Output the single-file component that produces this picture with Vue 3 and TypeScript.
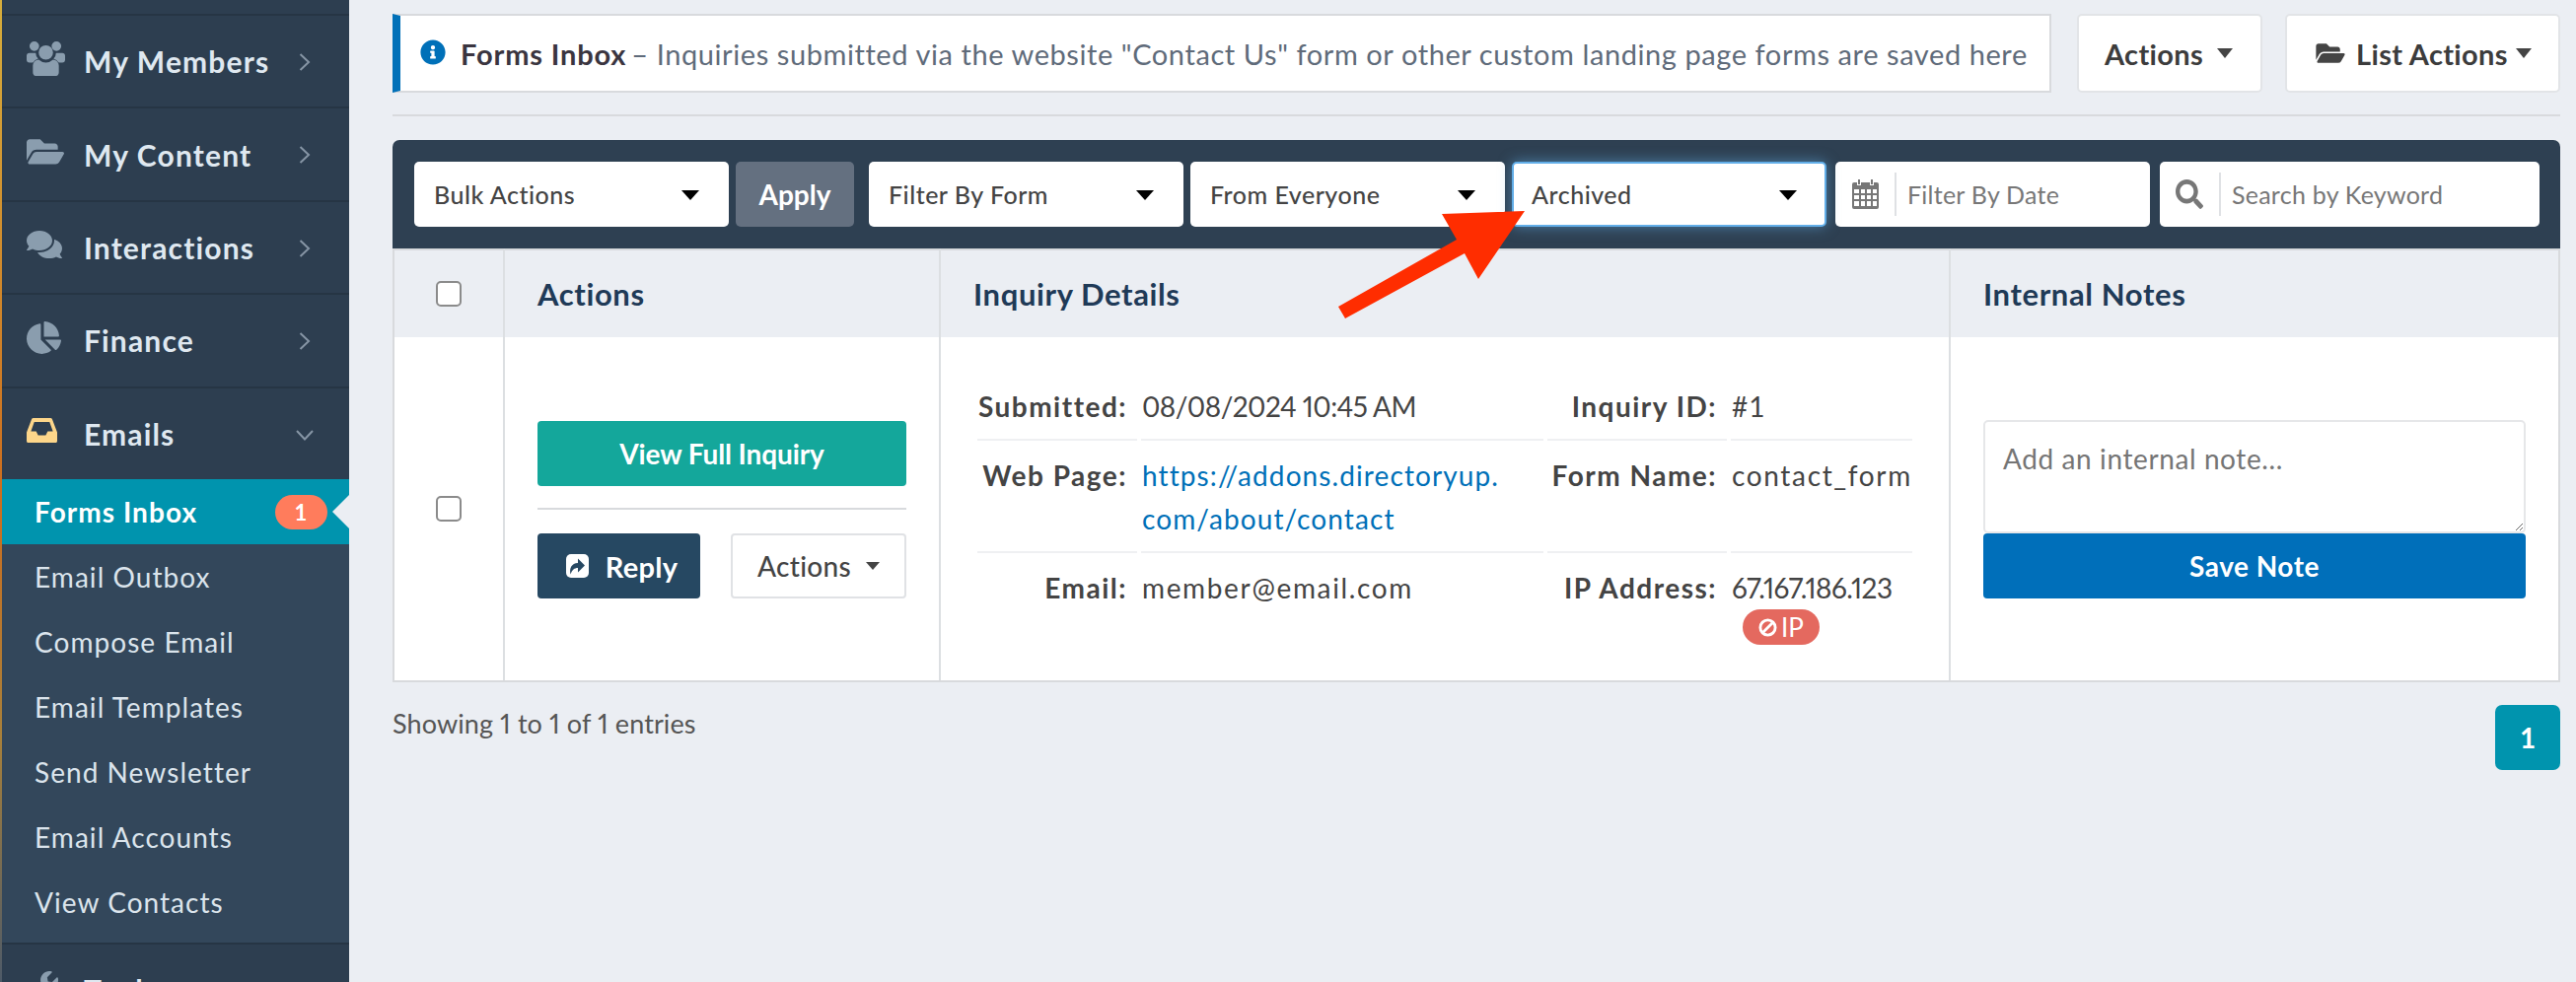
<script setup lang="ts">
interface NavIcon { box: string; d: string }
const icons: Record<string, NavIcon> = {
  folder: { box: '0 0 576 512', d: 'M572.694 292.093L500.27 416.248A63.997 63.997 0 0 1 444.989 448H45.025c-18.523 0-30.064-20.093-20.731-36.093l72.424-124.155A64 64 0 0 1 152 256h399.964c18.523 0 30.064 20.093 20.73 36.093zM152 224h328v-48c0-26.51-21.49-48-48-48H272l-64-64H48C21.49 64 0 85.49 0 112v278.046l69.077-118.418C86.214 242.25 117.989 224 152 224z' },
  comments: { box: '0 0 576 512', d: 'M416 192c0-88.4-93.1-160-208-160S0 103.6 0 192c0 34.3 14.1 65.9 38 92-13.4 30.2-35.5 54.2-35.8 54.5-2.2 2.3-2.8 5.7-1.5 8.7S4.8 352 8 352c36.6 0 66.9-12.3 88.7-25 32.2 15.7 70.3 25 111.3 25 114.9 0 208-71.6 208-160zm122 220c23.9-26 38-57.7 38-92 0-66.9-53.5-124.2-129.3-148.1.9 6.6 1.3 13.3 1.3 20.1 0 105.9-107.7 192-240 192-10.8 0-21.3-.8-31.7-1.9C207.8 439.6 281.8 480 368 480c41 0 79.1-9.2 111.3-25 21.8 12.7 52.1 25 88.7 25 3.2 0 6.1-1.9 7.3-4.8 1.3-2.9.7-6.3-1.5-8.7-.3-.3-22.4-24.2-35.8-54.5z' },
  pie: { box: '0 0 544 512', d: 'M527.79 288H290.5l158.03 158.03c6.04 6.04 15.98 6.53 22.19.68 38.7-36.46 65.32-85.61 73.13-140.86 1.34-9.46-6.51-17.85-16.06-17.85zm-15.83-64.8C503.72 103.74 408.26 8.28 288.8.04 279.68-.59 272 7.1 272 16.24V240h223.77c9.14 0 16.82-7.68 16.19-16.8zM224 288V50.71c0-9.55-8.39-17.4-17.84-16.06C86.99 51.49-4.1 155.6.14 280.37 4.5 408.51 114.83 513.59 243.03 511.98c50.4-.63 96.97-16.87 135.26-44.03 7.9-5.6 8.42-17.23 1.57-24.08L224 288z' },
  users: { box: '0 0 40 36', d: 'M8 0a5 5 0 1 1 0 10a5 5 0 1 1 0-10zM31 0a5 5 0 1 1 0 10a5 5 0 1 1 0-10zM3 12h6.5a8 8 0 0 0 2.5 6a11 11 0 0 0-5.5 4H3a3 3 0 0 1-3-3v-4a3 3 0 0 1 3-3zM30.500 12H37a3 3 0 0 1 3 3v4a3 3 0 0 1-3 3h-3.500a11 11 0 0 0-5.500-4a8 8 0 0 0 2.500-6zM20 4a7.500 7.500 0 1 1 0 15a7.500 7.500 0 1 1 0-15zM12.500 19a11 11 0 0 0 15 0a6 6 0 0 1 6 6v7a4 4 0 0 1-4 4h-19a4 4 0 0 1-4-4v-7a6 6 0 0 1 6-6z' },
  inbox: { box: '0 0 32 26', d: 'M7 0h18a2 2 0 0 1 1.800 1.200L32 15v9a2 2 0 0 1-2 2H2a2 2 0 0 1-2-2v-9L5.200 1.200A2 2 0 0 1 7 0zM8 4L4.500 14H10l2 4h8l2-4h5.500L24 4z' },
  wrench: { box: '0 0 512 512', d: 'M507.73 109.1c-2.24-9.03-13.54-12.09-20.12-5.51l-74.36 74.36-67.88-11.31-11.31-67.88 74.36-74.36c6.62-6.62 3.43-17.9-5.66-20.16-47.38-11.74-99.55.91-136.58 37.93-39.64 39.64-50.55 97.1-34.05 147.2L18.74 402.76c-24.99 24.99-24.99 65.51 0 90.5 24.99 24.99 65.51 24.99 90.5 0l213.21-213.21c50.12 16.71 107.47 5.68 147.37-34.22 37.07-37.07 49.7-89.32 37.91-136.73z' }
}
const topNav = [
  { label: 'My Members', icon: 'users', w: 39 },
  { label: 'My Content', icon: 'folder', w: 38 },
  { label: 'Interactions', icon: 'comments', w: 36 },
  { label: 'Finance', icon: 'pie', w: 35 }
]
const subNav = ['Email Outbox', 'Compose Email', 'Email Templates', 'Send Newsletter', 'Email Accounts', 'View Contacts']
const selects = ['Filter By Form', 'From Everyone']
</script>

<template>
  <div class="page">
    <aside class="sidebar">
      <div class="nav-item" v-for="n in topNav" :key="n.label">
        <span class="nav-ico"><svg :width="n.w" :viewBox="icons[n.icon].box" fill="#8a9dae"><path :d="icons[n.icon].d" /></svg></span>
        <span class="nav-label">{{ n.label }}</span>
        <svg class="chev" width="12" height="20" viewBox="0 0 12 20" fill="none" stroke="#8695a5" stroke-width="2"><path d="M1.500 2l8.500 8-8.500 8" /></svg>
      </div>
      <div class="nav-item">
        <span class="nav-ico"><svg width="31" :viewBox="icons.inbox.box" fill="#fdd68a"><path :d="icons.inbox.d" /></svg></span>
        <span class="nav-label">Emails</span>
        <svg class="chev down" width="20" height="12" viewBox="0 0 20 12" fill="none" stroke="#8695a5" stroke-width="2"><path d="M2 2l8 8.500 8-8.500" /></svg>
      </div>
      <div class="sub-active">
        <span>Forms Inbox</span>
        <span class="count">1</span>
        <span class="notch"></span>
      </div>
      <div class="sub-list">
        <div class="sub-item" v-for="s in subNav" :key="s">{{ s }}</div>
      </div>
      <div class="nav-item">
        <span class="nav-ico"><svg width="32" :viewBox="icons.wrench.box" fill="#8a9dae"><path :d="icons.wrench.d" /></svg></span>
        <span class="nav-label">Tools</span>
      </div>
    </aside>

    <main class="main">
      <div class="top-row">
        <div class="alert">
          <svg class="info" width="26" height="26" viewBox="0 0 512 512" fill="#0070b8"><path d="M256 8C119.043 8 8 119.083 8 256c0 136.997 111.043 248 248 248s248-111.003 248-248C504 119.083 392.957 8 256 8zm0 110c23.196 0 42 18.804 42 42s-18.804 42-42 42-42-18.804-42-42 18.804-42 42-42zm56 254c0 6.627-5.373 12-12 12h-88c-6.627 0-12-5.373-12-12v-24c0-6.627 5.373-12 12-12h12v-64h-12c-6.627 0-12-5.373-12-12v-24c0-6.627 5.373-12 12-12h64c6.627 0 12 5.373 12 12v100h12c6.627 0 12 5.373 12 12v24z" /></svg>
          <strong>Forms Inbox</strong>
          <span class="alert-text">– Inquiries submitted via the website "Contact Us" form or other custom landing page forms are saved here</span>
        </div>
        <div class="top-btn actions-btn">Actions <i class="caret"></i></div>
        <div class="top-btn list-btn">
          <svg width="30" height="26" viewBox="0 0 576 512" fill="#444"><path :d="icons.folder.d" /></svg>
          List Actions <i class="caret tight"></i>
        </div>
      </div>
      <hr class="rule" />

      <div class="toolbar">
        <div class="sel">Bulk Actions<i class="tri"></i></div>
        <div class="apply">Apply</div>
        <div class="sel" v-for="s in selects" :key="s">{{ s }}<i class="tri"></i></div>
        <div class="sel focused">Archived<i class="tri"></i></div>
        <div class="field date">
          <span class="field-ico">
            <svg width="27" height="30" viewBox="0 0 27 30" fill="#777"><path d="M6 0h2v5H6zM19 0h2v5h-2zM2 3h3v3h4V3h9v3h4V3h3a2 2 0 0 1 2 2v23a2 2 0 0 1-2 2H2a2 2 0 0 1-2-2V5a2 2 0 0 1 2-2zM2 10v4h5v-4zm7 0v4h4v-4zm6 0v4h4v-4zm6 0v4h4v-4zM2 16v4h5v-4zm7 0v4h4v-4zm6 0v4h4v-4zm6 0v4h4v-4zM2 22v5h5v-5zm7 0v5h4v-5zm6 0v5h4v-5zm6 0v5h4v-5z" /></svg>
          </span>
          <span>Filter By Date</span>
        </div>
        <div class="field search">
          <span class="field-ico">
            <svg width="28" height="30" viewBox="0 0 512 512" preserveAspectRatio="none" fill="#777"><path d="M505 442.700L405.300 343c-4.500-4.500-10.600-7-17-7H372c27.600-35.300 44-79.700 44-128C416 93.100 322.900 0 208 0S0 93.100 0 208s93.100 208 208 208c48.300 0 92.700-16.400 128-44v16.300c0 6.400 2.500 12.500 7 17l99.700 99.700c9.400 9.400 24.600 9.400 33.900 0l28.300-28.300c9.400-9.400 9.400-24.600.1-34zM208 336c-70.700 0-128-57.200-128-128 0-70.700 57.200-128 128-128 70.700 0 128 57.200 128 128 0 70.700-57.200 128-128 128z" /></svg>
          </span>
          <span>Search by Keyword</span>
        </div>
      </div>

      <div class="table">
        <div class="th cell-check"><input class="check" type="checkbox" /></div>
        <div class="th">Actions</div>
        <div class="th">Inquiry Details</div>
        <div class="th last">Internal Notes</div>

        <div class="td cell-check"><input class="check" type="checkbox" /></div>
        <div class="td act-cell">
          <div class="btn-view">View Full Inquiry</div>
          <div class="act-rule"></div>
          <div class="act-row">
            <div class="btn-reply">
              <svg width="23" height="24" viewBox="0 0 23 24"><rect width="23" height="24" rx="5" fill="#fff" /><path d="M4.500 20.500c-1.500-6.500 1-11 7.500-11.500V4.500l7 7-7 7V14c-3.500 0-6 2-7.500 6.500z" fill="#264862" /></svg>
              Reply
            </div>
            <div class="btn-act">Actions <i class="caret small"></i></div>
          </div>
        </div>
        <div class="td details">
          <div class="dl">
            <div class="k">Submitted:</div><div class="v num">08/08/2024 10:45 AM</div>
            <div class="k">Inquiry ID:</div><div class="v">#1</div>
            <div class="k">Web Page:</div><div class="v"><a class="link">https://addons.directoryup.<br />com/about/contact</a></div>
            <div class="k">Form Name:</div><div class="v wide">contact_form</div>
            <div class="k end">Email:</div><div class="v wide end">member@email.com</div>
            <div class="k end">IP Address:</div>
            <div class="v num end ip">
              67.167.186.123
              <span class="ip-badge">
                <svg width="19" height="19" viewBox="0 0 20 20" fill="none" stroke="#fff" stroke-width="3"><circle cx="10" cy="10" r="8" /><path d="M4.500 15.500l11-11" /></svg>
                IP
              </span>
            </div>
          </div>
        </div>
        <div class="td notes last">
          <textarea class="note" placeholder="Add an internal note..."></textarea>
          <div class="btn-save">Save Note</div>
        </div>
      </div>

      <div class="foot">
        <span class="showing">Showing 1 to 1 of 1 entries</span>
        <span class="pager">1</span>
      </div>

      <svg class="arrow" width="200" height="120" viewBox="1350 210 200 120" fill="#ff2d00"><path d="M1546 214L1462 217L1477 243L1357 311L1364 323L1485 257L1499 283z" /></svg>
    </main>
  </div>
</template>

<style>
html, body { margin: 0; overflow: hidden; background: #ebeef3; }
</style>

<style scoped>
.page { display: flex; height: 996px; overflow: hidden; font-family: Lato, "Open Sans", sans-serif; background: #ebeef3; color: #444; }
.sidebar { box-sizing: border-box; flex: 0 0 354px; padding-top: 14px; background: #2d3e50; border-left: 2px solid; border-image: linear-gradient(#d6ad3c, #cc6d1e 50%, #a8803a 75%, #4d5a68) 1; overflow: hidden; }
.nav-item { box-sizing: border-box; height: 94.4px; border-top: 2px solid #263544; display: flex; align-items: center; position: relative; color: #dfe8f0; font-size: 30px; font-weight: 700; }
.nav-ico { width: 83px; display: flex; justify-content: flex-start; padding-left: 25px; box-sizing: border-box; flex: none; }
.nav-ico svg { display: block; margin-top: -6px; }
.nav-label { flex: 1; letter-spacing: 1.15px; }
.chev { position: absolute; left: 301px; top: 37px; }
.chev.down { left: 297px; top: 41px; }
.sub-active { box-sizing: border-box; height: 66px; padding-left: 33px; background: #0094ae; color: #fff; font-size: 28px; font-weight: 700; display: flex; align-items: center; position: relative; letter-spacing: 1.05px; }
.count { position: absolute; left: 277px; top: 16px; width: 53px; height: 35px; border-radius: 18px; background: #ff7c5c; font-size: 22px; display: flex; align-items: center; justify-content: center; }
.notch { position: absolute; right: 0; top: 16px; width: 0; height: 0; border-top: 17px solid transparent; border-bottom: 17px solid transparent; border-right: 17px solid #ebeef3; }
.sub-list { background: #33475b; padding-bottom: 8px; }
.sub-item { height: 66px; padding-left: 33px; display: flex; align-items: center; color: #dbe4ec; font-size: 28px; letter-spacing: 1.05px; }
.sub-list + .nav-item { height: 94px; }

.main { flex: 1; min-width: 0; box-sizing: border-box; padding: 14px 16px 0 44px; position: relative; }
.top-row { display: flex; height: 80px; }
.alert { box-sizing: border-box; flex: 0 0 1682px; display: flex; align-items: center; background: #fff; border: 2px solid #d8dadd; border-left: 8px solid #0070b8; padding-left: 20px; font-size: 29px; white-space: nowrap; }
.info { margin-right: 15px; margin-top: -2px; }
.alert strong { color: #3a3540; font-weight: 700; letter-spacing: .85px; margin-right: 5px; }
.alert-text { color: #5f6b7a; letter-spacing: .58px; }
.top-btn { box-sizing: border-box; background: #fff; border: 2px solid #e2e4e7; border-radius: 5px; display: flex; align-items: center; color: #3c3c3c; font-size: 29px; font-weight: 700; letter-spacing: .35px; }
.actions-btn { width: 188px; margin-left: 26px; padding-left: 26px; gap: 14px; }
.list-btn { width: 279px; margin-left: 23px; padding-left: 29px; gap: 11px; }
.caret { display: inline-block; width: 0; height: 0; border-left: 8.500px solid transparent; border-right: 8.500px solid transparent; border-top: 10px solid #444; }
.caret.tight { margin-left: -3px; }
.caret.small { border-left-width: 7.500px; border-right-width: 7.500px; border-top-width: 8px; }
.rule { border: 0; height: 2px; background: #d8dadd; margin: 22px 0 24px; }

.toolbar { box-sizing: border-box; height: 110px; padding: 22px; background: #2e4052; border-radius: 7px 7px 0 0; display: flex; gap: 7px; align-items: stretch; }
.sel { box-sizing: border-box; flex: 0 0 319px; background: #fff; border-radius: 5px; display: flex; align-items: center; padding-left: 20px; font-size: 25px; letter-spacing: .5px; color: #444; position: relative; font-weight: 500; }
.tri { position: absolute; right: 30px; top: 29px; width: 0; height: 0; border-left: 9px solid transparent; border-right: 9px solid transparent; border-top: 10px solid #000; }
.focused { border: 2px solid #62aee8; padding-left: 18px; box-shadow: 0 0 14px rgba(98, 174, 232, .55); }
.focused .tri { right: 28px; top: 27px; }
.apply { flex: 0 0 120px; margin-right: 8px; background: #647080; color: #fff; border-radius: 5px; display: flex; align-items: center; justify-content: center; font-size: 28px; font-weight: 700; letter-spacing: 0; }
.field { box-sizing: border-box; background: #fff; border-radius: 5px; display: flex; align-items: center; color: #777; font-size: 25px; letter-spacing: .25px; }
.date { flex: 0 0 319px; margin-left: 2px; }
.search { flex: 0 0 385px; margin-left: 3px; }
.field-ico { box-sizing: border-box; width: 62px; height: 44px; border-right: 2px solid #dfe1e4; display: flex; align-items: center; justify-content: center; margin-right: 11px; flex: none; }

.table { display: grid; grid-template-columns: 112px 442px 1024px 616px; grid-template-rows: 90px 348px; border: 2px solid #d8dadd; border-top: 0; }
.th { background: #ebeef3; border-right: 2px solid #dcdfe2; display: flex; align-items: center; padding-left: 33px; font-size: 31px; font-weight: 700; color: #1f3a57; letter-spacing: .62px; border-top: 2px solid #d8dadd; box-sizing: border-box; }
.td { background: #fff; border-right: 2px solid #dcdfe2; box-sizing: border-box; }
.last { border-right: 0; }
.cell-check { padding: 0; display: flex; align-items: center; justify-content: center; }
.check { appearance: none; box-sizing: border-box; width: 26px; height: 26px; margin: 0 0 0 -1px; border: 2px solid #8b8b8b; border-radius: 5px; background: #fff; }
.act-cell { padding: 85px 33px 0; }
.btn-view { height: 66px; background: #14a79b; color: #fff; border-radius: 4px; display: flex; align-items: center; justify-content: center; font-size: 28px; font-weight: 700; letter-spacing: -.1px; }
.act-rule { height: 2px; background: #d8dadd; margin: 22px 0 24px; }
.act-row { display: flex; justify-content: space-between; height: 66px; }
.btn-reply { box-sizing: border-box; width: 165px; padding-left: 6px; background: #264862; color: #fff; border-radius: 4px; display: flex; align-items: center; justify-content: center; gap: 17px; font-size: 29px; font-weight: 700; letter-spacing: .3px; }
.btn-act { box-sizing: border-box; width: 178px; border: 2px solid #e0e2e5; border-radius: 4px; display: flex; align-items: center; justify-content: center; gap: 15px; font-size: 28px; font-weight: 500; letter-spacing: .3px; color: #444; }
.details { padding: 35px 0 0 37px; }
.dl { display: grid; grid-template-columns: 162px 408px 182px 184px; column-gap: 4px; font-size: 28px; line-height: 44px; }
.k, .v { padding: 13px 0 11px; border-bottom: 2px solid #eff0f2; white-space: nowrap; }
.k { text-align: right; padding-right: 10px; font-weight: 700; color: #444; letter-spacing: 1.5px; }
.v { padding-left: 1px; color: #444; letter-spacing: 1.1px; }
.v.num { font-variant-numeric: proportional-nums; letter-spacing: -.55px; }
.v.wide { letter-spacing: 1.65px; }
.end { border-bottom: 0; }
.link { color: #0070b8; }
.ip { padding-bottom: 0; }
.ip-badge { display: flex; width: 78px; height: 36px; margin: 0 0 0 11px; box-sizing: border-box; background: #e4695f; border-radius: 18px; color: #fff; align-items: center; justify-content: center; gap: 4px; font-size: 26px; line-height: 36px; letter-spacing: 0; }
.notes { padding: 84px 33px 0 33px; }
.note { display: block; box-sizing: border-box; width: 100%; height: 115px; margin: 0; padding: 18px 18px; border: 2px solid #e6e7e9; border-radius: 5px; background: #fff; font: 28px/38px Lato, sans-serif; letter-spacing: .6px; resize: vertical; outline: 0; }
.note::placeholder { color: #757575; opacity: 1; }
.btn-save { height: 66px; background: #006fba; color: #fff; border-radius: 4px; display: flex; align-items: center; justify-content: center; font-size: 28px; font-weight: 700; letter-spacing: .5px; }
.foot { display: flex; justify-content: space-between; margin-top: 23px; }
.showing { font-size: 27px; line-height: 38px; letter-spacing: .1px; color: #555; font-variant-numeric: proportional-nums; }
.pager { width: 66px; height: 66px; border-radius: 7px; background: #0094ae; color: #fff; display: flex; align-items: center; justify-content: center; font-size: 28px; font-weight: 700; }
.arrow { position: absolute; left: 996px; top: 210px; }
</style>
